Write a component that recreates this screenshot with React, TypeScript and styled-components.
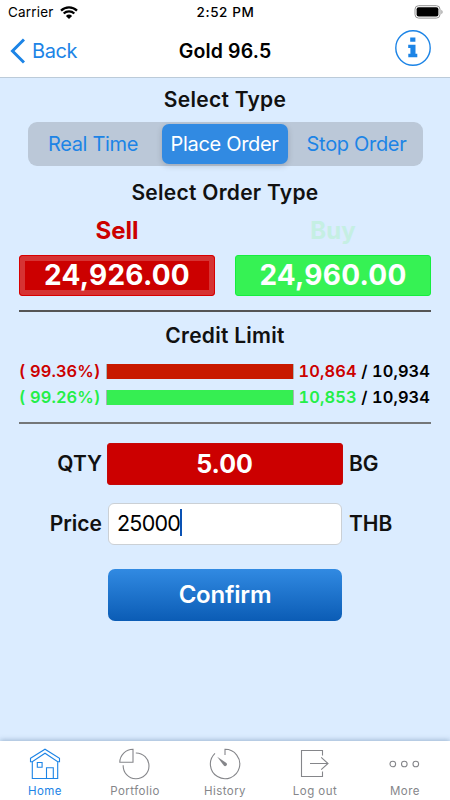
import React from "react";
import styled, { createGlobalStyle } from "styled-components";

const GlobalStyle = createGlobalStyle`
  * { box-sizing: border-box; }
  body { margin: 0; background: #dbecff; }
  #root { font-family: Inter, "Liberation Sans", sans-serif; }
  button { font-family: inherit; padding: 0; border: 0; background: none; }
`;

const RED = "#cc0000";
const GREEN = "#36f254";
const BLUE = "#1c84e6";

const Screen = styled.div`
  width: 450px;
  height: 800px;
  display: flex;
  flex-direction: column;
  background: #dbecff;
  color: #111;
  overflow: hidden;
  white-space: nowrap;
`;

const Header = styled.header`
  height: 78px;
  flex: none;
  background: #fff;
  border-bottom: 1px solid #bccbd9;
  color: #000;
`;

const StatusBar = styled.div`
  height: 24px;
  display: grid;
  grid-template-columns: 1fr auto 1fr;
  align-items: center;
  padding: 0 7px 0 8px;
  font-size: 13.5px;
`;

const Carrier = styled.div`
  display: flex;
  align-items: center;
  gap: 6px;
  letter-spacing: 0.2px;
`;

const Clock = styled.div`
  font-size: 13.5px;
  font-weight: 500;
  letter-spacing: 0.6px;
`;

const Battery = styled.svg`
  justify-self: end;
`;

const NavBar = styled.div`
  height: 53px;
  display: grid;
  grid-template-columns: 1fr auto 1fr;
  align-items: center;
  padding: 0 19px;
`;

const BackButton = styled.button`
  display: flex;
  align-items: center;
  gap: 7px;
  margin-left: -10px;
  color: ${BLUE};
  font-size: 20px;
  letter-spacing: -0.4px;
`;

const NavTitle = styled.h1`
  margin: 0;
  font-size: 19.5px;
  font-weight: 600;
  letter-spacing: 0.15px;
`;

const InfoButton = styled.button`
  justify-self: end;
  height: 36px;
  margin-top: -5px;
`;

const Content = styled.main`
  flex: 1;
  display: flex;
  flex-direction: column;
  padding: 0 19px;
`;

const Heading = styled.h2<{ $top: number }>`
  margin: ${(p) => p.$top}px 0 0;
  height: 26px;
  line-height: 26px;
  text-align: center;
  font-size: 21px;
  font-weight: 600;
  letter-spacing: 0.27px;
`;

const Segments = styled.div`
  align-self: center;
  width: 395px;
  height: 44px;
  margin-top: 9px;
  padding: 2px;
  display: grid;
  grid-template-columns: 132px 126px 1fr;
  border-radius: 9px;
  background: #bbc8d8;
`;

const Segment = styled.button<{ $active?: boolean }>`
  height: 40px;
  border-radius: 7px;
  font-size: 20px;
  letter-spacing: -0.32px;
  color: ${(p) => (p.$active ? "#fff" : BLUE)};
  background: ${(p) => (p.$active ? "#318ae2" : "transparent")};
  box-shadow: ${(p) => (p.$active ? "0 2px 6px rgba(0,0,0,.16)" : "none")};

  &:first-child {
    padding-right: 5px;
  }
  &:last-child {
    padding-left: 5px;
  }
`;

const Quotes = styled.div`
  display: grid;
  grid-template-columns: 196px 196px;
  justify-content: space-between;
  margin-top: 9px;
`;

const QuoteLabel = styled.div<{ $color: string }>`
  height: 32px;
  line-height: 32px;
  margin-bottom: 8px;
  text-align: center;
  font-size: 24px;
  font-weight: 700;
  color: ${(p) => p.$color};
`;

const QuoteButton = styled.button<{ $color: string; $selected?: boolean }>`
  width: 196px;
  height: 41px;
  border-radius: 3px;
  border: 1px solid ${(p) => (p.$selected ? "#d80000" : "#16ed3f")};
  background: ${(p) => p.$color};
  box-shadow: ${(p) => (p.$selected ? "inset 0 0 0 5px #d63333" : "none")};
  color: #fff;
  font-size: 28px;
  font-weight: 700;
  letter-spacing: 0.25px;
  line-height: 39px;
`;

const Divider = styled.hr<{ $top: number; $color: string }>`
  width: 412px;
  height: 2px;
  flex: none;
  margin: ${(p) => p.$top}px 0 0;
  border: 0;
  background: ${(p) => p.$color};
`;

const Limits = styled.div`
  margin-top: 9px;
`;

const LimitRow = styled.div`
  display: grid;
  grid-template-columns: 87px 188px 1fr;
  align-items: center;
  height: 26.3px;
  font-size: 16.4px;
  font-weight: 600;
  letter-spacing: 0.1px;
  font-variant-numeric: tabular-nums;
`;

const Percent = styled.span<{ $color: string }>`
  color: ${(p) => p.$color};
`;

const Bar = styled.div`
  height: 15px;
  background: #a9b3b3;
  padding: 0.5px 1px 0 0.5px;
`;

const BarFill = styled.div<{ $color: string }>`
  height: 14.5px;
  background: ${(p) => p.$color};
`;

const Amount = styled.span`
  text-align: right;
  padding-right: 1px;
  color: #000;
`;

const Used = styled.span<{ $color: string }>`
  color: ${(p) => p.$color};
`;

const FormRow = styled.div<{ $top: number }>`
  display: grid;
  grid-template-columns: 83px 236px auto;
  column-gap: 5px;
  align-items: center;
  margin-top: ${(p) => p.$top}px;
  height: 42px;
`;

const FieldLabel = styled.label<{ $end?: boolean }>`
  text-align: ${(p) => (p.$end ? "right" : "left")};
  padding-left: ${(p) => (p.$end ? 0 : 1)}px;
  font-size: 21px;
  font-weight: 600;
`;

const Quantity = styled.button`
  height: 42px;
  padding-right: 1px;
  border-radius: 3px;
  border: 1px solid #c70707;
  background: ${RED};
  color: #fff;
  font-size: 25px;
  font-weight: 700;
`;

const PriceField = styled.div`
  height: 42px;
  margin: 0 1px;
  padding: 0 0 2px 8px;
  display: flex;
  align-items: center;
  border: 1px solid #cbd0d5;
  border-radius: 6px;
  background: #fff;
  color: #000;
  font-size: 21.5px;
  letter-spacing: -0.75px;
`;

const Caret = styled.span`
  width: 2px;
  height: 27px;
  background: #0a52b4;
`;

const Confirm = styled.button`
  align-self: center;
  width: 234px;
  height: 52px;
  margin-top: 24px;
  border-radius: 7px;
  background: linear-gradient(#318ae2, #0b5cb5);
  color: #fff;
  font-size: 24px;
  font-weight: 600;
  letter-spacing: -0.2px;
`;

const TabBar = styled.nav`
  height: 59px;
  flex: none;
  display: grid;
  grid-template-columns: repeat(5, 90px);
  background: #fff;
  box-shadow: 0 -1px 5px rgba(40, 80, 120, 0.35);
`;

const Tab = styled.button<{ $active?: boolean }>`
  display: flex;
  flex-direction: column;
  align-items: center;
  padding-top: 6px;
  gap: 3px;
  color: ${(p) => (p.$active ? BLUE : "#85868a")};
  font-size: 11.5px;
  line-height: 15px;
  letter-spacing: 0.45px;
`;

const TabIcon = ({ children }: { children: React.ReactNode }) => (
  <svg width="34" height="34" viewBox="0 0 34 34" fill="none" stroke="currentColor" strokeWidth="1.1">
    {children}
  </svg>
);

const tabs = [
  {
    label: "Home",
    icon: <path d="M2.5 11.3 17 2.2l14.5 9.1v3.5h-1.8L17 6.2 4.3 14.8H2.5zM4.3 14.8v16.7h25.4V14.8M9.3 15.5h4.8v4.8H9.3zM18.5 31.5V20.8h6.8v10.7" />,
  },
  {
    label: "Portfolio",
    icon: <path d="M15 2.3v13H1.8A13.2 13.2 0 0 1 15 2.3zM17.8 6A12.9 12.9 0 1 1 5.2 18.2" />,
  },
  {
    label: "History",
    icon: (
      <>
        <path d="M17 8V2.3a14.7 14.7 0 1 1-10 4" />
        <path d="m9.2 9.8 9.2 6.2a1.8 1.8 0 0 1-2.6 2.5z" fill="currentColor" stroke="none" />
      </>
    ),
  },
  {
    label: "Log out",
    icon: <path d="M24.5 8.5v-5h-21v26h21v-5M12 16.5h18M23.2 10.3l6.8 6.2-6.8 6.2" />,
  },
  {
    label: "More",
    icon: (
      <>
        <circle cx="4.8" cy="17" r="2.8" />
        <circle cx="16.3" cy="17" r="2.8" />
        <circle cx="27.8" cy="17" r="2.8" />
      </>
    ),
  },
];

const limits = [
  { percent: "( 99.36%)", used: "10,864", total: "10,934", text: RED, fill: "#c81900" },
  { percent: "( 99.26%)", used: "10,853", total: "10,934", text: "#24ef48", fill: "#36ee52" },
];

export default function App() {
  return (
    <>
      <GlobalStyle />
      <Screen>
        <Header>
          <StatusBar>
            <Carrier>
              Carrier
              <svg width="18" height="13" viewBox="0 0 18 13">
                <path d="M1 4.6a11.6 11.6 0 0 1 16 0M3.7 7.5a7.7 7.7 0 0 1 10.6 0" fill="none" stroke="#000" strokeWidth="2.3" />
                <path d="M5.9 9.9a4.6 4.6 0 0 1 6.2 0L9 13z" />
              </svg>
            </Carrier>
            <Clock>2:52 PM</Clock>
            <Battery width="29" height="14" viewBox="0 0 29 14">
              <rect x="1" y=".7" width="25" height="12.4" rx="3.6" fill="none" stroke="#929292" />
              <rect x="2.6" y="2.2" width="21.8" height="9.4" rx="2" />
              <path d="M27.4 4.8v4.4q1.2-.8 1.2-2.2t-1.2-2.2" fill="#929292" />
            </Battery>
          </StatusBar>
          <NavBar>
            <BackButton>
              <svg width="16" height="26" viewBox="0 0 16 26">
                <path d="M15 1.5 3.5 13 15 24.5" fill="none" stroke={BLUE} strokeWidth="3" />
              </svg>
              Back
            </BackButton>
            <NavTitle>Gold 96.5</NavTitle>
            <InfoButton aria-label="Information">
              <svg width="36" height="36" viewBox="0 0 36 36">
                <circle cx="18" cy="18" r="17.2" fill="none" stroke={BLUE} strokeWidth="1.4" />
                <path d="M15.2 7.5h5.2v4.3h-5.2zM13.2 14.7h7.3v9.1h1.8v3.4h-9v-3.4h2.1v-5.7h-2.2z" fill={BLUE} />
              </svg>
            </InfoButton>
          </NavBar>
        </Header>
        <Content>
          <Heading $top={9}>Select Type</Heading>
          <Segments>
            <Segment>Real Time</Segment>
            <Segment $active>Place Order</Segment>
            <Segment>Stop Order</Segment>
          </Segments>
          <Heading $top={14}>Select Order Type</Heading>
          <Quotes>
            <div>
              <QuoteLabel $color={RED}>Sell</QuoteLabel>
              <QuoteButton $color={RED} $selected>24,926.00</QuoteButton>
            </div>
            <div>
              <QuoteLabel $color="#c5efe3">Buy</QuoteLabel>
              <QuoteButton $color={GREEN}>24,960.00</QuoteButton>
            </div>
          </Quotes>
          <Divider $top={14} $color="#555" />
          <Heading $top={11}>Credit Limit</Heading>
          <Limits>
            {limits.map((l) => (
              <LimitRow key={l.percent}>
                <Percent $color={l.text}>{l.percent}</Percent>
                <Bar><BarFill $color={l.fill} /></Bar>
                <Amount><Used $color={l.text}>{l.used}</Used> / {l.total}</Amount>
              </LimitRow>
            ))}
          </Limits>
          <Divider $top={11} $color="#747779" />
          <FormRow $top={19}>
            <FieldLabel $end>QTY</FieldLabel>
            <Quantity>5.00</Quantity>
            <FieldLabel>BG</FieldLabel>
          </FormRow>
          <FormRow $top={18}>
            <FieldLabel $end>Price</FieldLabel>
            <PriceField>25000<Caret /></PriceField>
            <FieldLabel>THB</FieldLabel>
          </FormRow>
          <Confirm>Confirm</Confirm>
        </Content>
        <TabBar>
          {tabs.map((t) => (
            <Tab key={t.label} $active={t.label === "Home"}>
              <TabIcon>{t.icon}</TabIcon>
              {t.label}
            </Tab>
          ))}
        </TabBar>
      </Screen>
    </>
  );
}
